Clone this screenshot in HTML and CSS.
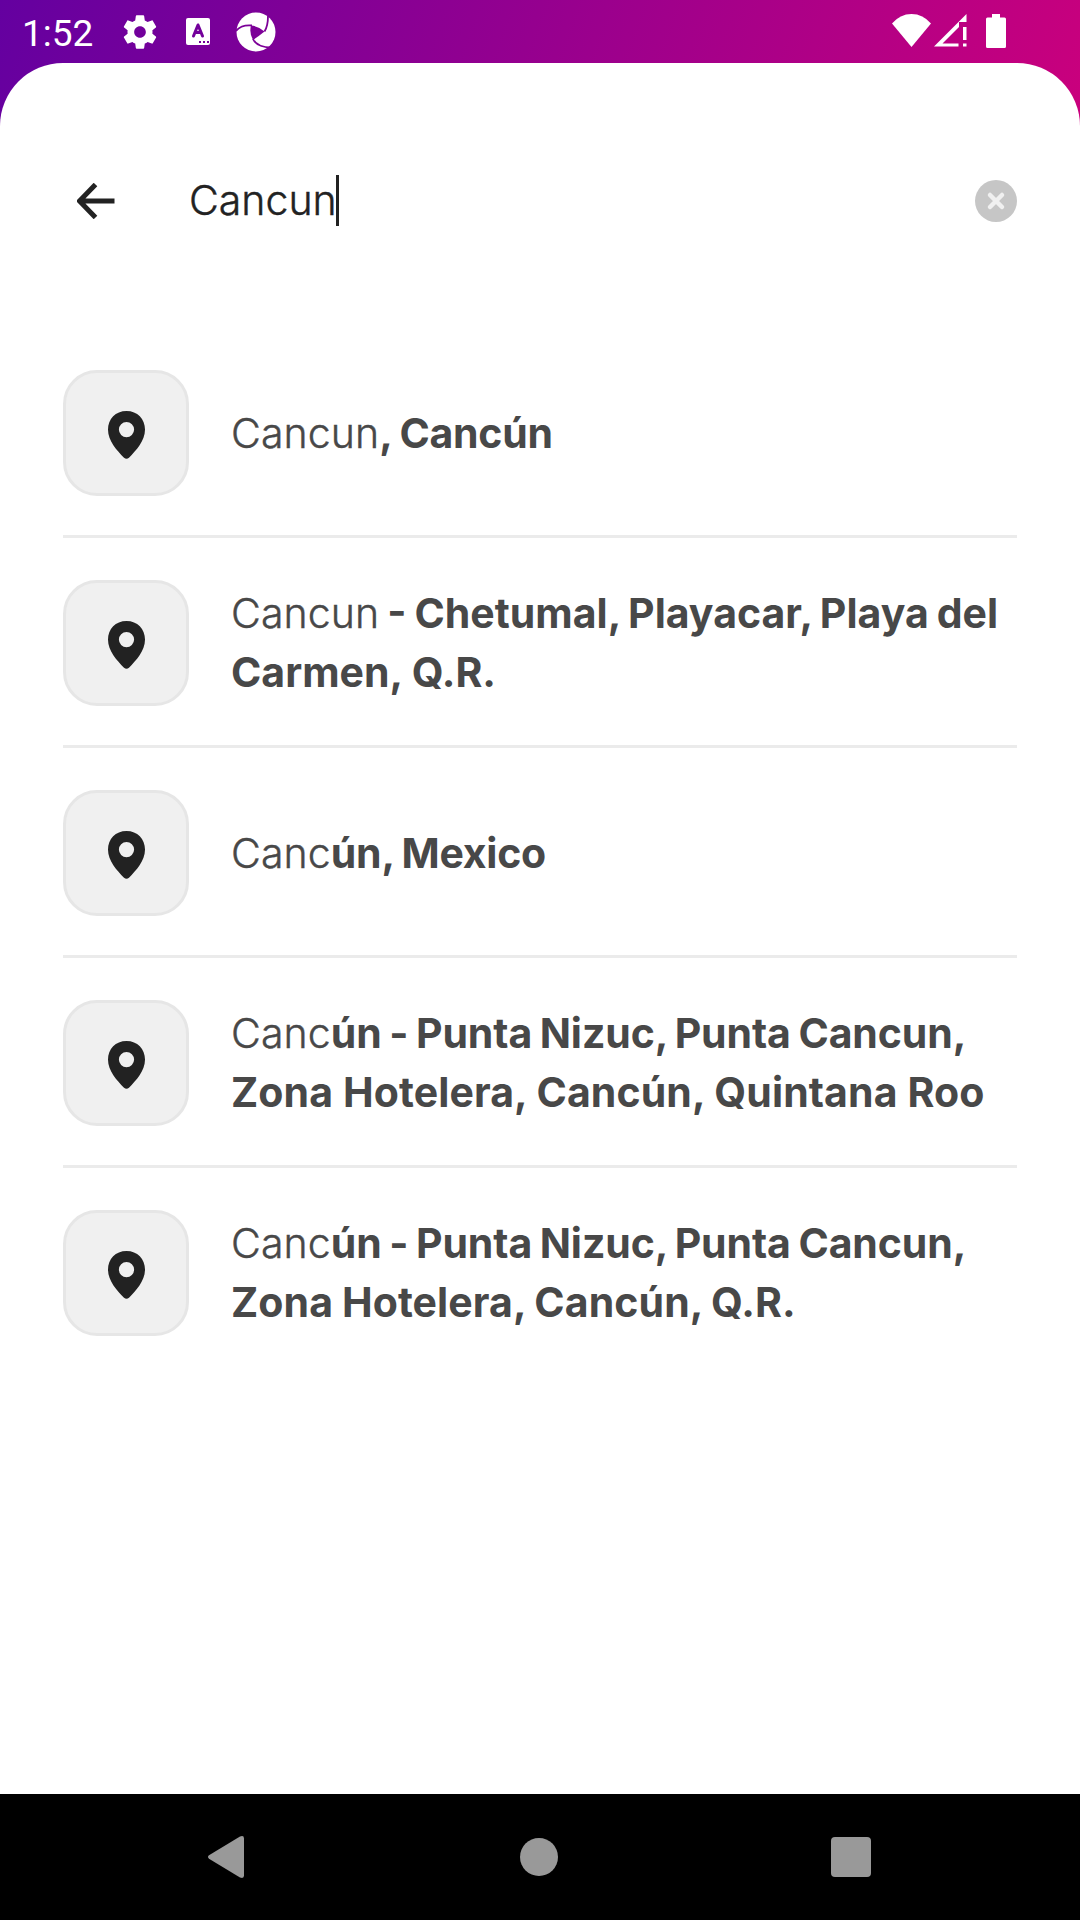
FILE: index.html
```html
<!DOCTYPE html>
<html lang="en">
<head>
<meta charset="utf-8">
<title>Search</title>
<link rel="stylesheet" href="styles.css">
</head>
<body>
<svg class="defs" width="0" height="0" aria-hidden="true">
  <symbol id="pin" viewBox="0 0 40 50"><path fill-rule="evenodd" d="M19.500 1C8.600 1 1 9 1 19.500C1 31 10 40.500 17 47.700Q19.500 50 22 47.700C29 40.500 38 31 38 19.500C38 9 30.400 1 19.500 1ZM19.500 12A7.600 7.600 0 1 1 19.500 27.200A7.600 7.600 0 1 1 19.500 12Z"/></symbol>
</svg>
<div class="screen">
  <header class="status">
    <span class="clock">1:52</span>
    <svg class="gear" viewBox="0 0 24 24"><path d="M19.430 12.980c.040-.320.070-.640.070-.980s-.030-.660-.070-.980l2.110-1.650c.190-.150.240-.420.120-.640l-2-3.460c-.120-.220-.390-.300-.610-.220l-2.490 1c-.520-.400-1.080-.730-1.690-.980l-.380-2.650C14.460 2.180 14.250 2 14 2h-4c-.250 0-.460.180-.490.420l-.380 2.650c-.610.250-1.170.590-1.690.980l-2.490-1c-.230-.090-.490 0-.610.220l-2 3.460c-.130.220-.070.490.120.640l2.110 1.650c-.040.320-.070.650-.070.980s.030.660.070.980l-2.110 1.650c-.190.150-.240.420-.120.640l2 3.460c.120.220.390.300.610.220l2.490-1c.520.400 1.080.730 1.690.980l.380 2.650c.030.240.240.420.490.420h4c.250 0 .460-.180.490-.420l.380-2.650c.610-.250 1.170-.590 1.690-.980l2.490 1c.230.090.490 0 .610-.220l2-3.460c.120-.220.070-.490-.120-.640l-2.110-1.650zM12 15.500c-1.930 0-3.500-1.570-3.500-3.500s1.570-3.500 3.500-3.500 3.500 1.570 3.500 3.500-1.570 3.500-3.500 3.500z"/></svg>
    <svg class="keyboard" viewBox="0 0 24 27"><rect width="24" height="27" rx="2"/><path class="cut" d="M7.500 18L12 7L16.500 18M9 14.500H15"/><path class="dots" d="M13 24h2M17 24h2M21 24h2"/></svg>
    <svg class="aperture" viewBox="0 0 40 40">
      <mask id="blades"><rect width="40" height="40" fill="#fff"/><path d="M15 13.500Q22 14 28.500 19.500Q23 24 17 28Q13 21 15 13.500Z" fill="#000"/><path d="M32 4Q32 14 28.500 19.500M0 19Q5 12.500 16 13.500M17 27Q21 36 38 35.500" stroke="#000" stroke-width="1.800" fill="none"/></mask>
      <circle cx="20" cy="20" r="19.500" mask="url(#blades)"/>
    </svg>
    <span class="grow"></span>
    <svg class="wifi" viewBox="0 0 39 33"><path d="M0 9.500Q8 0 19.500 0T39 9.500L19.500 33Z"/></svg>
    <svg class="signal" viewBox="0 0 33 33"><path fill-rule="evenodd" d="M32.500 0V8H25V13L8.500 29.500H24.500V32.500H0ZM29 13H32.500V26H29ZM29 29.500H32.500V32.500H29Z"/></svg>
    <svg class="battery" viewBox="0 0 20 34"><path d="M6 0H14V3.500H18.500Q20 3.500 20 5V32.500Q20 34 18.500 34H1.500Q0 34 0 32.500V5Q0 3.500 1.500 3.500H6Z"/></svg>
  </header>
  <main class="sheet">
    <div class="search">
      <svg class="back" viewBox="0 0 38 36"><path d="M37.500 18H3M18.500 1.500L2.500 18L18.500 34.500"/></svg>
      <span class="query">Cancun</span><span class="caret"></span>
      <span class="grow"></span>
      <svg class="clear" viewBox="0 0 42 42"><circle cx="21" cy="21" r="21"/><path d="M15 15L27 27M27 15L15 27"/></svg>
    </div>
    <ul class="results">
      <li><span class="tile"><svg><use href="#pin"/></svg></span><p class="single"><span class="line short"><span>Cancun</span><b>, Cancún</b></span></p></li>
      <li><span class="tile"><svg><use href="#pin"/></svg></span><p><span class="line first"><span>Cancun</span><b> - Chetumal, Playacar, Playa del</b></span><span class="line"><b>Carmen, Q.R.</b></span></p></li>
      <li><span class="tile"><svg><use href="#pin"/></svg></span><p class="single"><span class="line short"><span>Canc</span><b>ún, Mexico</b></span></p></li>
      <li><span class="tile"><svg><use href="#pin"/></svg></span><p><span class="line first punta"><span>Canc</span><b>ún - Punta Nizuc, Punta Cancun,</b></span><span class="line wide"><b>Zona Hotelera, Cancún, Quintana Roo</b></span></p></li>
      <li><span class="tile"><svg><use href="#pin"/></svg></span><p><span class="line first punta"><span>Canc</span><b>ún - Punta Nizuc, Punta Cancun,</b></span><span class="line zona"><b>Zona Hotelera, Cancún, Q.R.</b></span></p></li>
    </ul>
  </main>
  <nav class="nav">
    <svg class="nav-back" viewBox="0 0 38 42"><path d="M2 19.300Q0 21 2 22.700L33 41.500Q37 43 37 39.500V2.500Q37 -1 33 .500Z"/></svg>
    <span class="nav-home"></span>
    <span class="nav-recent"></span>
  </nav>
</div>
</body>
</html>
```
FILE: styles.css
```css
* { box-sizing: border-box; }
body { margin: 0; }
.defs { position: absolute; }
.screen { width: 1080px; height: 1920px; display: flex; flex-direction: column; background: linear-gradient(110deg, #6400a0 0, #cc007c 1080px); overflow: hidden; }
.grow { flex: 1; }
.status { height: 63px; flex: none; display: flex; align-items: flex-start; padding: 0 74px 0 22px; fill: #fff; }
.clock { font: 37px/43px Roboto, sans-serif; color: #fff; width: 98px; padding-top: 12px; }
.gear { width: 40px; height: 40px; margin: 12px 0 0; }
.keyboard { width: 24px; height: 27px; margin: 18px 0 0 26px; }
.keyboard .cut { fill: none; stroke: #73009a; stroke-width: 3; stroke-linejoin: round; stroke-linecap: round; }
.keyboard .dots { stroke: #73009a; stroke-width: 2; }
.aperture { width: 40px; height: 40px; margin: 12px 0 0 26px; }
.wifi { width: 39px; height: 33px; margin: 14px 3px 0 0; }
.signal { width: 33px; height: 33px; margin: 14px 19px 0 0; }
.battery { width: 20px; height: 34px; margin-top: 14px; }
.sheet { flex: 1; background: #fff; border-radius: 63px 63px 0 0; padding: 75px 63px 0; }
.search { height: 126px; display: flex; align-items: center; padding-left: 14px; color: #222; font: 300 41px/59px Inter, "Liberation Sans", sans-serif; }
.back { width: 38px; height: 36px; margin-right: 74px; fill: none; stroke: #222; stroke-width: 5; }
.query { width: 147px; white-space: nowrap; margin-bottom: 2px; -webkit-text-stroke: .4px #222; }
.caret { width: 3px; height: 51px; background: #222; margin-bottom: 1px; }
.clear { width: 42px; height: 42px; fill: #c6c6c6; stroke: #f0f0f0; stroke-width: 4.500; stroke-linecap: round; }
.clear circle { stroke: none; }
.results { list-style: none; margin: 64px 0 0; padding: 0; }
.results li { height: 210px; padding-top: 3px; display: flex; align-items: center; border-bottom: 3px solid #ebebeb; }
.results li:last-child { border-color: transparent; }
.tile { flex: none; width: 126px; height: 126px; border: 3px solid #e6e6e6; border-radius: 34px; background: #f0f0f0; display: flex; align-items: center; justify-content: center; margin-right: 42px; }
.tile svg { width: 40px; height: 50px; fill: #222; margin: 3px 0 0 1px; }
.results p { margin: 0; font: 300 41px/59px Inter, "Liberation Sans", sans-serif; color: #484848; }
.results .single { padding-top: 1px; }
.line { display: block; white-space: pre; }
.line span { -webkit-text-stroke: .4px #484848; letter-spacing: .1px; }
.line b { font-weight: 700; }
.short b { letter-spacing: -.25px; word-spacing: -1.500px; }
.first b { letter-spacing: 0; word-spacing: -1.700px; }
.punta b { letter-spacing: -.1px; word-spacing: -2px; }
.wide b { letter-spacing: .11px; }
.zona b { letter-spacing: .1px; word-spacing: -1px; }
.nav { height: 126px; flex: none; background: #000; display: flex; align-items: center; justify-content: space-between; padding: 0 209px 0 207px; }
.nav-back { width: 38px; height: 42px; fill: #999; }
.nav-home { width: 38px; height: 38px; border-radius: 50%; background: #999; margin-left: 2px; }
.nav-recent { width: 40px; height: 40px; border-radius: 4px; background: #999; }
```
